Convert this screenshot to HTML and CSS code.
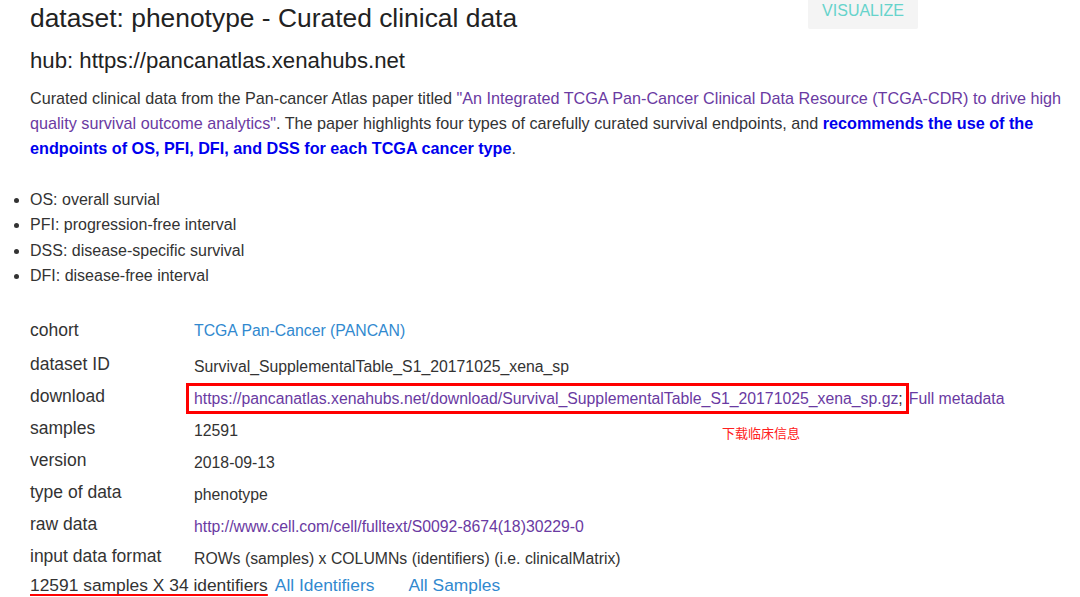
FILE: index.html
```html
<!DOCTYPE html>
<html>
<head>
<meta charset="utf-8">
<link rel="stylesheet" href="styles.css">
</head>
<body>
<div class="page">
  <header class="head">
    <h1 class="title">dataset: phenotype - Curated clinical data</h1>
    <button class="viz">VISUALIZE</button>
  </header>
  <h2 class="hub">hub: https://pancanatlas.xenahubs.net</h2>
  <p class="desc">Curated clinical data from the Pan-cancer Atlas paper titled <a class="link-visited" href="#">"An Integrated TCGA Pan-Cancer Clinical Data Resource (TCGA-CDR) to drive high quality survival outcome analytics"</a>. The paper highlights four types of carefully curated survival endpoints, and <a class="link-strong" href="#">recommends the use of the endpoints of OS, PFI, DFI, and DSS for each TCGA cancer type</a>.</p>
  <ul class="endpoints">
    <li>OS: overall survial</li>
    <li>PFI: progression-free interval</li>
    <li>DSS: disease-specific survival</li>
    <li>DFI: disease-free interval</li>
  </ul>
  <div class="meta">
    <div class="label first">cohort</div>
    <div class="value first"><a class="link-blue" href="#">TCGA Pan-Cancer (PANCAN)</a></div>
    <div class="label">dataset ID</div>
    <div class="value">Survival_SupplementalTable_S1_20171025_xena_sp</div>
    <div class="label">download</div>
    <div class="value download">
      <span class="boxed"><a class="link-visited" href="#">https://pancanatlas.xenahubs.net/download/Survival_SupplementalTable_S1_20171025_xena_sp.gz</a>;</span><a class="link-visited" href="#">Full metadata</a>
      <span class="note">下载临床信息</span>
    </div>
    <div class="label">samples</div>
    <div class="value">12591</div>
    <div class="label">version</div>
    <div class="value">2018-09-13</div>
    <div class="label">type of data</div>
    <div class="value">phenotype</div>
    <div class="label">raw data</div>
    <div class="value"><a class="link-visited" href="#">http://www.cell.com/cell/fulltext/S0092-8674(18)30229-0</a></div>
    <div class="label">input data format</div>
    <div class="value">ROWs (samples) x COLUMNs (identifiers) (i.e. clinicalMatrix)</div>
  </div>
  <div class="summary">
    <span class="count">12591 samples X 34 identifiers</span>
    <a class="link-blue" href="#">All Identifiers</a>
    <a class="link-blue samples-link" href="#">All Samples</a>
  </div>
</div>
</body>
</html>
```

FILE: styles.css
```css
html, body {
  margin: 0;
  padding: 0;
  background: #ffffff;
}
body {
  font-family: "Liberation Sans", Arial, "Noto Sans CJK SC", sans-serif;
  color: #333333;
  width: 1080px;
  min-height: 597px;
}
.page {
  padding-left: 30px;
}
a {
  text-decoration: none;
}
.link-visited {
  color: #6a3aa2;
}
.link-strong {
  color: #0000ee;
  font-weight: bold;
}
.link-blue {
  color: #3189cf;
}
.head {
  display: flex;
  align-items: flex-start;
  height: 44px;
}
.title {
  margin: 0;
  padding-top: 2px;
  font-size: 26.4px;
  font-weight: normal;
  line-height: 32px;
  color: #222222;
}
.viz {
  margin-left: auto;
  margin-right: 162px;
  width: 110px;
  height: 29px;
  border: none;
  border-radius: 0 0 2px 2px;
  background: #f4f4f4;
  color: #66d3cb;
  font-family: "Liberation Sans", Arial, sans-serif;
  font-size: 16px;
  padding: 0 0 8px;
  line-height: 20px;
}
.hub {
  margin: 0;
  padding-top: 2px;
  font-size: 22.2px;
  font-weight: normal;
  line-height: 30px;
  color: #222222;
}
.desc {
  margin: 10px 0 0;
  width: 1045px;
  font-size: 16.2px;
  line-height: 25px;
}
.endpoints {
  margin: 26px 0 0;
  padding: 0;
  font-size: 16px;
  line-height: 25.4px;
}
.endpoints li {
  margin: 0;
}
.meta {
  margin-top: 26px;
  display: grid;
  grid-template-columns: 164px auto;
  grid-template-rows: 34px;
  grid-auto-rows: 32px;
  align-items: center;
}
.label {
  font-size: 17.5px;
}
.value {
  font-size: 15.8px;
  padding-top: 4px;
}
.label.first {
  align-self: start;
  padding-top: 5px;
}
.value.first {
  align-self: start;
  padding-top: 7px;
}
.download {
  position: relative;
}
.boxed {
  margin-left: -8px;
  padding: 4px 3px 4px 5px;
  border: 3px solid #ff0000;
}
.note {
  position: absolute;
  left: 528px;
  top: 37px;
  color: #ff2020;
  font-size: 13px;
}
.summary {
  display: flex;
  align-items: baseline;
  margin-top: 0;
  font-size: 17.4px;
  line-height: 24px;
}
.count {
  text-decoration: underline;
  text-decoration-color: #ff0000;
  text-decoration-thickness: 2px;
  text-underline-offset: 3px;
  text-decoration-skip-ink: none;
}
.summary .link-blue {
  margin-left: 7px;
}
.summary .samples-link {
  margin-left: 34px;
}
```
